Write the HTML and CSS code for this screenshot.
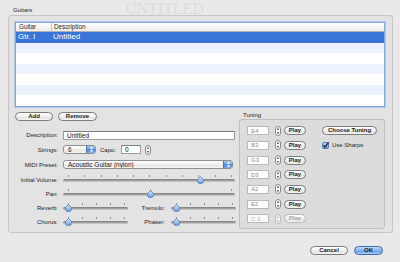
FILE: index.html
```html
<!doctype html>
<html lang="en">
	<head>
		<meta charset="UTF-8" />
		<title>Guitars</title>
		<link rel="stylesheet" href="styles.css">
	</head>
	<body>
		<div class="watermark">UNTITLED</div>
		<div class="dialog">
			<div class="group-title">Guitars</div>
			<div class="group">
				<div class="table">
					<div class="thead"><div class="c1">Guitar</div><div class="c2">Description</div></div>
					<div class="row selected"><div class="c1">Gtr. I</div><div class="c2">Untitled</div></div>
					<div class="row"></div>
					<div class="row"></div>
					<div class="row"></div>
					<div class="row"></div>
					<div class="row"></div>
					<div class="row"></div>
				</div>

				<div class="lower">
					<div class="left">
						<div class="actions">
							<button class="btn add">Add</button>
							<button class="btn remove">Remove</button>
						</div>

						<div class="form">
							<div class="field h14">
								<label>Description:</label>
								<input class="text desc" type="text" value="Untitled">
							</div>
							<div class="field h15">
								<label>Strings:</label>
								<div class="inline">
									<div class="popup strings"><span>6</span><span class="cap"><svg width="5" height="7" viewBox="0 0 5 7"><path d="M2.5 .5L4.3 2.8H.7Z M2.5 6.5L4.3 4.2H.7Z" fill="#fff"/></svg></span></div>
									<label class="capo-label">Capo:</label>
									<input class="text capo" type="text" value="0">
									<span class="stepper"><svg width="6" height="10" viewBox="0 0 6 10"><rect x=".5" y=".5" width="5" height="9" rx="2.5" fill="#fbfbfb" stroke="#8a8a8a"/><path d="M3 2L4.2 3.7H1.8Z M3 8L4.2 6.3H1.8Z" fill="#333"/></svg></span>
								</div>
							</div>
							<div class="field h15">
								<label>MIDI Preset:</label>
								<div class="popup midi"><span>Acoustic Guitar (nylon)</span><span class="cap"><svg width="5" height="7" viewBox="0 0 5 7"><path d="M2.5 .5L4.3 2.8H.7Z M2.5 6.5L4.3 4.2H.7Z" fill="#fff"/></svg></span></div>
							</div>
							<div class="field h15">
								<label>Initial Volume:</label>
								<div class="slider" style="--v:.81">
									<div class="ticks"><i></i><i></i><i></i><i></i><i></i><i></i><i></i><i></i><i></i><i></i><i></i></div>
									<div class="track"></div>
									<span class="knob"><svg width="7" height="8" viewBox="0 0 7 8"><path d="M3.5 .5L6.5 3.5V5.5Q6.5 7.5 3.5 7.5Q.5 7.5 .5 5.5V3.5Z" fill="url(#kg)" stroke="#4f78b4" stroke-width=".8"/></svg></span>
								</div>
							</div>
							<div class="field h14">
								<label>Pan:</label>
								<div class="slider" style="--v:.5">
									<div class="ticks"><i></i><i></i><i></i></div>
									<div class="track"></div>
									<span class="knob"><svg width="7" height="8" viewBox="0 0 7 8"><path d="M3.5 .5L6.5 3.5V5.5Q6.5 7.5 3.5 7.5Q.5 7.5 .5 5.5V3.5Z" fill="url(#kg)" stroke="#4f78b4" stroke-width=".8"/></svg></span>
								</div>
							</div>
							<div class="field h14">
								<label>Reverb:</label>
								<div class="pair">
									<div class="slider small" style="--v:0">
										<div class="ticks"><i></i><i></i><i></i><i></i><i></i></div>
										<div class="track"></div>
										<span class="knob"><svg width="7" height="8" viewBox="0 0 7 8"><path d="M3.5 .5L6.5 3.5V5.5Q6.5 7.5 3.5 7.5Q.5 7.5 .5 5.5V3.5Z" fill="url(#kg)" stroke="#4f78b4" stroke-width=".8"/></svg></span>
									</div>
									<label class="mid">Tremolo:</label>
									<div class="slider small" style="--v:0">
										<div class="ticks"><i></i><i></i><i></i><i></i><i></i></div>
										<div class="track"></div>
										<span class="knob"><svg width="7" height="8" viewBox="0 0 7 8"><path d="M3.5 .5L6.5 3.5V5.5Q6.5 7.5 3.5 7.5Q.5 7.5 .5 5.5V3.5Z" fill="url(#kg)" stroke="#4f78b4" stroke-width=".8"/></svg></span>
									</div>
								</div>
							</div>
							<div class="field h14">
								<label>Chorus:</label>
								<div class="pair">
									<div class="slider small" style="--v:0">
										<div class="ticks"><i></i><i></i><i></i><i></i><i></i></div>
										<div class="track"></div>
										<span class="knob"><svg width="7" height="8" viewBox="0 0 7 8"><path d="M3.5 .5L6.5 3.5V5.5Q6.5 7.5 3.5 7.5Q.5 7.5 .5 5.5V3.5Z" fill="url(#kg)" stroke="#4f78b4" stroke-width=".8"/></svg></span>
									</div>
									<label class="mid">Phaser:</label>
									<div class="slider small" style="--v:0">
										<div class="ticks"><i></i><i></i><i></i><i></i><i></i></div>
										<div class="track"></div>
										<span class="knob"><svg width="7" height="8" viewBox="0 0 7 8"><path d="M3.5 .5L6.5 3.5V5.5Q6.5 7.5 3.5 7.5Q.5 7.5 .5 5.5V3.5Z" fill="url(#kg)" stroke="#4f78b4" stroke-width=".8"/></svg></span>
									</div>
								</div>
							</div>
						</div>
					</div>

					<div class="tuning">
						<div class="tuning-title">Tuning</div>
						<div class="tuning-box">
							<div class="tune-col">
								<div class="tune-row"><input class="text note" type="text" value="E4"><span class="stepper"><svg width="6" height="10" viewBox="0 0 6 10"><rect x=".5" y=".5" width="5" height="9" rx="2.5" fill="#fbfbfb" stroke="#8a8a8a"/><path d="M3 2L4.2 3.7H1.8Z M3 8L4.2 6.3H1.8Z" fill="#333"/></svg></span><button class="btn play">Play</button></div>
								<div class="tune-row"><input class="text note" type="text" value="B3"><span class="stepper"><svg width="6" height="10" viewBox="0 0 6 10"><rect x=".5" y=".5" width="5" height="9" rx="2.5" fill="#fbfbfb" stroke="#8a8a8a"/><path d="M3 2L4.2 3.7H1.8Z M3 8L4.2 6.3H1.8Z" fill="#333"/></svg></span><button class="btn play">Play</button></div>
								<div class="tune-row"><input class="text note" type="text" value="G3"><span class="stepper"><svg width="6" height="10" viewBox="0 0 6 10"><rect x=".5" y=".5" width="5" height="9" rx="2.5" fill="#fbfbfb" stroke="#8a8a8a"/><path d="M3 2L4.2 3.7H1.8Z M3 8L4.2 6.3H1.8Z" fill="#333"/></svg></span><button class="btn play">Play</button></div>
								<div class="tune-row"><input class="text note" type="text" value="D3"><span class="stepper"><svg width="6" height="10" viewBox="0 0 6 10"><rect x=".5" y=".5" width="5" height="9" rx="2.5" fill="#fbfbfb" stroke="#8a8a8a"/><path d="M3 2L4.2 3.7H1.8Z M3 8L4.2 6.3H1.8Z" fill="#333"/></svg></span><button class="btn play">Play</button></div>
								<div class="tune-row"><input class="text note" type="text" value="A2"><span class="stepper"><svg width="6" height="10" viewBox="0 0 6 10"><rect x=".5" y=".5" width="5" height="9" rx="2.5" fill="#fbfbfb" stroke="#8a8a8a"/><path d="M3 2L4.2 3.7H1.8Z M3 8L4.2 6.3H1.8Z" fill="#333"/></svg></span><button class="btn play">Play</button></div>
								<div class="tune-row"><input class="text note" type="text" value="E2"><span class="stepper"><svg width="6" height="10" viewBox="0 0 6 10"><rect x=".5" y=".5" width="5" height="9" rx="2.5" fill="#fbfbfb" stroke="#8a8a8a"/><path d="M3 2L4.2 3.7H1.8Z M3 8L4.2 6.3H1.8Z" fill="#333"/></svg></span><button class="btn play">Play</button></div>
								<div class="tune-row disabled"><input class="text note" type="text" value="C-1" disabled><span class="stepper"><svg width="6" height="10" viewBox="0 0 6 10"><rect x=".5" y=".5" width="5" height="9" rx="2.5" fill="#f4f4f4" stroke="#bcbcbc"/><path d="M3 2L4.2 3.7H1.8Z M3 8L4.2 6.3H1.8Z" fill="#aaa"/></svg></span><button class="btn play" disabled>Play</button></div>
							</div>
							<div class="tune-side">
								<div class="tune-row"><button class="btn choose">Choose Tuning</button></div>
								<div class="tune-row">
									<span class="check"><svg width="7" height="7" viewBox="0 0 7 7"><rect x=".5" y=".5" width="6" height="6" rx="1.2" fill="url(#cg)" stroke="#3f6aa8" stroke-width=".8"/><path d="M1.6 3.4L3 5L6.6 .3" fill="none" stroke="#111" stroke-width="1.1"/></svg></span>
									<span class="check-label">Use Sharps</span>
								</div>
							</div>
						</div>
					</div>
				</div>
			</div>

			<div class="footer">
				<button class="btn cancel">Cancel</button>
				<button class="btn ok">OK</button>
			</div>
		</div>

		<svg class="defs" width="0" height="0">
			<defs>
				<linearGradient id="kg" x1="0" y1="0" x2="0" y2="1">
					<stop offset="0" stop-color="#d6e6fb"/>
					<stop offset="1" stop-color="#6b9fe2"/>
				</linearGradient>
				<linearGradient id="cg" x1="0" y1="0" x2="0" y2="1">
					<stop offset="0" stop-color="#bcd6f6"/>
					<stop offset="1" stop-color="#5a92de"/>
				</linearGradient>
			</defs>
		</svg>
	</body>
</html>
```

FILE: styles.css
```css
body {
	margin: 0;
	width: 400px;
	height: 262px;
	position: relative;
	overflow: hidden;
	background: #e9e9e9;
	font-family: "Liberation Sans", Arial, sans-serif;
	font-size: 6px;
	color: #1c1c1c;
}
.watermark {
	position: absolute;
	left: 125px;
	top: 1px;
	line-height: 16px;
	font-family: "Liberation Serif", serif;
	font-size: 16px;
	color: #dcdcdc;
}
.defs {
	position: absolute;
}
.dialog {
	position: relative;
	padding: 6px 7px 0 8px;
}
.group-title {
	height: 9px;
	line-height: 9px;
	padding-left: 5px;
}
.group {
	height: 218px;
	box-sizing: border-box;
	border: 1px solid #c6c6c6;
	border-radius: 3px;
	background: #e3e3e3;
	padding: 6px 7px 0 6px;
}

/* table */
.table {
	height: 85px;
	box-sizing: border-box;
	border: 1px solid #7ea7e2;
	box-shadow: 0 0 0 1px rgba(126, 167, 226, .45);
	background: #fff;
	overflow: hidden;
}
.thead {
	display: flex;
	height: 8px;
	line-height: 8px;
	font-size: 6.3px;
	border-bottom: 1px solid #b2b2b2;
	background: linear-gradient(#ffffff, #ededed);
}
.thead .c1 {
	width: 32px;
	padding-left: 3px;
	border-right: 1px solid #c4c4c4;
}
.thead .c2 {
	padding-left: 2px;
}
.row {
	display: flex;
	height: 10.57px;
	line-height: 10.57px;
	font-size: 8px;
}
.row:nth-child(odd) {
	background: #edf3fe;
}
.row.selected {
	background: #3875d7;
	color: #fff;
}
.row .c1 {
	width: 34px;
	padding-left: 2px;
}
.row .c2 {
	padding-left: 1px;
}

/* lower area */
.lower {
	display: flex;
	gap: 3px;
	margin-top: 4px;
}
.left {
	width: 221px;
}
.actions {
	display: flex;
	align-items: center;
	gap: 5px;
	height: 10px;
}
.btn {
	appearance: none;
	height: 9px;
	padding: 0;
	border: 1px solid #7c7c7c;
	border-radius: 5px;
	background: linear-gradient(#ffffff, #f1f1f1 50%, #dedede 51%, #f4f4f4);
	font-family: "Liberation Sans", Arial, sans-serif;
	font-size: 6px;
	font-weight: bold;
	line-height: 7px;
	color: #1c1c1c;
}
.btn.add {
	width: 38px;
}
.btn.remove {
	width: 39px;
}
.form {
	margin-top: 7px;
}
.field {
	display: grid;
	grid-template-columns: 43px 1fr;
	column-gap: 5px;
	align-items: center;
}
.h14 {
	height: 14px;
}
.h15 {
	height: 15px;
}
.field > label {
	text-align: right;
}
.text {
	box-sizing: border-box;
	height: 9px;
	padding: 0 3px;
	margin: 0;
	border: 1px solid #9b9b9b;
	border-top-color: #7d7d7d;
	background: #fff;
	font-family: "Liberation Sans", Arial, sans-serif;
	font-size: 6.5px;
	line-height: 7px;
	color: #111;
	outline: none;
}
.text.desc {
	width: 172px;
}
.inline {
	display: flex;
	align-items: center;
}
.popup {
	box-sizing: border-box;
	display: flex;
	align-items: center;
	justify-content: space-between;
	height: 9px;
	padding-left: 4px;
	border: 1px solid #8f8f8f;
	border-radius: 3px;
	background: linear-gradient(#ffffff, #f0f0f0 50%, #e2e2e2 51%, #f6f6f6);
	font-size: 6.5px;
	overflow: hidden;
}
.popup .cap {
	display: flex;
	align-items: center;
	justify-content: center;
	align-self: stretch;
	width: 8px;
	background: linear-gradient(#a9cbf4, #5b95e2 50%, #3d7bd6 51%, #7eb1ef);
	border-left: 1px solid #4a74b0;
}
.popup.strings {
	width: 33px;
}
.popup.midi {
	width: 170px;
}
.capo-label {
	margin-left: 4px;
}
.text.capo {
	width: 20px;
	margin-left: 5px;
}
.stepper {
	display: flex;
	margin-left: 4px;
}

/* sliders */
.slider {
	position: relative;
	height: 14px;
	box-sizing: border-box;
	padding-top: 2px;
	width: 172px;
}
.slider.small {
	width: 65px;
}
.ticks {
	display: flex;
	justify-content: space-between;
	height: 2px;
	padding: 0 3px 0 5px;
}
.ticks i {
	width: 1px;
	background: #8e8e8e;
}
.track {
	height: 3px;
	margin-top: 2px;
	border-radius: 1.5px;
	background: linear-gradient(#7a7a7a, #a8a8a8 60%, #d4d4d4);
}
.knob {
	position: absolute;
	top: 3px;
	left: calc(5px + (100% - 8px) * var(--v) - 3.5px);
	display: flex;
}
.pair {
	display: flex;
	align-items: center;
}
.pair .mid {
	flex: 1;
	text-align: right;
	padding-right: 6px;
}

/* tuning */
.tuning {
	width: 146px;
}
.tuning-title {
	height: 8px;
	line-height: 8px;
	padding-left: 4px;
}
.tuning-box {
	display: flex;
	gap: 16px;
	height: 110px;
	box-sizing: border-box;
	padding: 3.5px 0 0 7px;
	border: 1px solid #bdbdbd;
	border-radius: 3px;
	background: #dcdcdc;
}
.tune-row {
	display: flex;
	align-items: center;
	height: 14.67px;
}
.text.note {
	width: 22px;
	font-size: 6px;
	color: #8a8a8a;
	border-color: #b9b9b9;
}
.tune-row .stepper {
	margin-left: 6px;
}
.btn.play {
	width: 22px;
	margin-left: 3px;
}
.btn:disabled {
	color: #a8a8a8;
	border-color: #b8b8b8;
}
.text:disabled {
	background: #fafafa;
	color: #b0b0b0;
}
.btn.choose {
	width: 55px;
}
.check {
	display: flex;
}
.check-label {
	margin-left: 3px;
}

/* footer */
.footer {
	display: flex;
	justify-content: flex-end;
	gap: 6px;
	margin-top: 13px;
	padding-right: 10px;
}
.btn.cancel {
	width: 38px;
}
.btn.ok {
	width: 29px;
	border-color: #3c6db3;
	background: linear-gradient(#c6def9, #80b2f0 50%, #5c98e6 51%, #a5cdf8);
}
```
